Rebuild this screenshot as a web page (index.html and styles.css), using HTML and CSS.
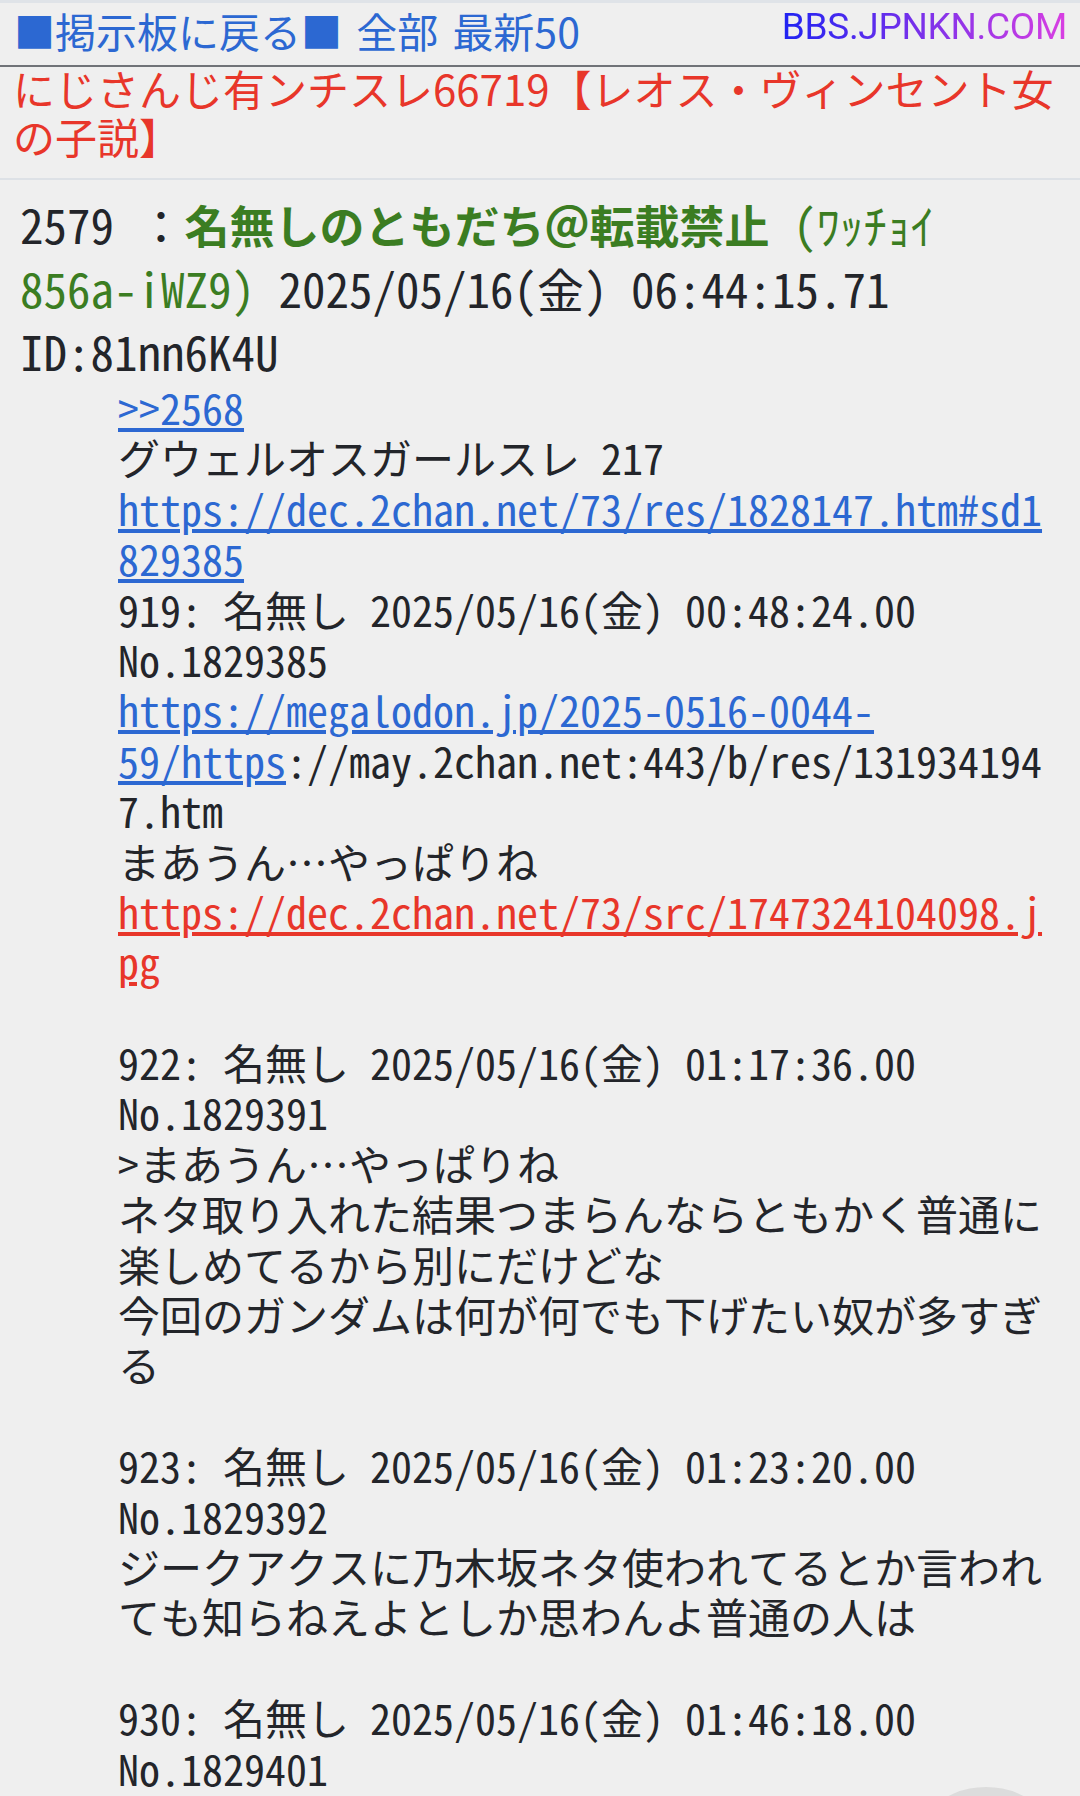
FILE: index.html
```html
<!DOCTYPE html>
<html lang="ja">
<head>
    <meta charset="UTF-8">
    <meta name="viewport" content="width=device-width, initial-scale=1.0">
    <title>にじさんじ有ンチスレ66719【レオス・ヴィンセント女の子説】</title>
    <link rel="stylesheet" href="styles.css">
</head>
<body>
<header class="nav">
    <div class="nav-links">
        <a href="#">■掲示板に戻る■</a> <a href="#">全部</a> <a href="#">最新50</a>
    </div>
    <a class="logo" href="#">BBS.JPNKN.COM</a>
</header>

<h1 class="thread-title">にじさんじ有ンチスレ66719【レオス・ヴィンセント女の子説】</h1>

<dl class="thread">
    <dt class="post-head">2579 <span class="sep">：</span><b class="name">名無しのともだち＠転載禁止</b> <span class="trip">(ﾜｯﾁｮｲ 856a-iWZ9)</span> 2025/05/16(金) 06:44:15.71 ID:81nn6K4U</dt>
    <dd class="post-body">
        <a href="#">&gt;&gt;2568</a><br>
        グウェルオスガールスレ 217<br>
        <a href="#">https://dec.2chan.net/73/res/1828147.htm#sd1829385</a><br>
        919: 名無し 2025/05/16(金) 00:48:24.00<br>
        No.1829385<br>
        <a href="#">https://megalodon.jp/2025-0516-0044-59/https</a>://may.2chan.net:443/b/res/1319341947.htm<br>
        まあうん…やっぱりね<br>
        <a class="img-link" href="#">https://dec.2chan.net/73/src/1747324104098.jpg</a><br>
        <br>
        922: 名無し 2025/05/16(金) 01:17:36.00<br>
        No.1829391<br>
        &gt;まあうん…やっぱりね<br>
        ネタ取り入れた結果つまらんならともかく普通に楽しめてるから別にだけどな<br>
        今回のガンダムは何が何でも下げたい奴が多すぎる<br>
        <br>
        923: 名無し 2025/05/16(金) 01:23:20.00<br>
        No.1829392<br>
        ジークアクスに乃木坂ネタ使われてるとか言われても知らねえよとしか思わんよ普通の人は<br>
        <br>
        930: 名無し 2025/05/16(金) 01:46:18.00<br>
        No.1829401
    </dd>
</dl>

<div class="fab"></div>
</body>
</html>
```

FILE: styles.css
```css
body {
    margin: 0;
    background: #efefef;
    color: #23252a;
    font-family: "Noto Sans CJK JP", sans-serif
}

.nav {
    display: flex;
    justify-content: space-between;
    align-items: flex-start;
    height: 62px;
    padding: 0 13px 0 14px;
    border-top: 3px solid #dfe3e8;
    border-bottom: 2px solid #707378
}

.nav-links {
    font-size: 41px;
    line-height: 54px;
    word-spacing: 5px
}

.nav-links a {
    color: #2c68d2;
    text-decoration: none
}

.logo {
    font-family: Roboto, sans-serif;
    font-size: 37px;
    line-height: 48px;
    letter-spacing: -0.3px;
    text-decoration: none;
    background: linear-gradient(90deg, #1f23f2, #d93fe2);
    -webkit-background-clip: text;
    background-clip: text;
    color: transparent
}

.thread-title {
    margin: -3px 0 0;
    padding: 0 14px 18px 13px;
    font-size: 42px;
    font-weight: normal;
    line-height: 48px;
    color: #e8362a;
    border-bottom: 2px solid #dde1e6
}

.thread {
    margin: 0;
    font-family: "Noto Sans Mono CJK JP", "Noto Sans CJK JP", monospace
}

.post-head {
    padding: 12px 30px 0 20px;
    font-size: 47px;
    line-height: 63px
}

.name {
    color: #3b7d22;
    font-size: 45px
}

.trip {
    color: #3b7d22
}

.post-body {
    margin: 0 0 0 118px;
    padding-right: 30px;
    font-size: 42px;
    line-height: 1.2;
    overflow-wrap: anywhere
}

.post-body a {
    color: #2c68d2
}

.post-body a.img-link {
    color: #e8362a
}

.fab {
    position: fixed;
    left: 902px;
    top: 1787px;
    width: 168px;
    height: 168px;
    border-radius: 50%;
    background: #dcdcdc
}
```
